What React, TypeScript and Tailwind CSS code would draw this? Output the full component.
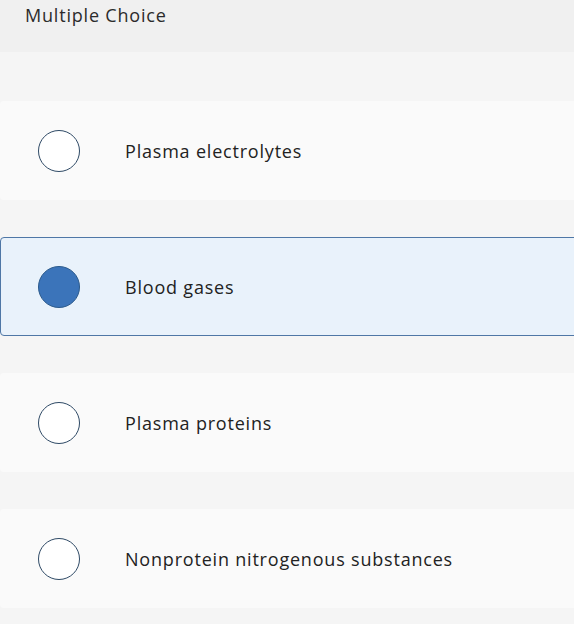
import React from "react";

const options = [
  { label: "Plasma electrolytes", selected: false },
  { label: "Blood gases", selected: true },
  { label: "Plasma proteins", selected: false },
  { label: "Nonprotein nitrogenous substances", selected: false },
];

export default function App() {
  return (
    <div className="w-[574px] h-[624px] overflow-hidden bg-[#f5f5f5] text-[#222]" style={{ fontFamily: "'Open Sans', sans-serif" }}>
      <div className="h-[52px] bg-[#f0f0f0] pl-[25px] pt-[3px] text-[18px] leading-[24px] tracking-[0.8px] text-[#2b2b2b]">
        Multiple Choice
      </div>
      <div className="flex flex-col gap-[37px] pt-[49px] pl-0 -mr-[8px]">
        {options.map((o) => (
          <div
            key={o.label}
            className={
              "h-[99px] rounded-l-[4px] flex items-center " +
              (o.selected
                ? "bg-[#e9f2fb] border border-[#4f77a6]"
                : "bg-[#fafafa] border border-transparent")
            }
          >
            <div className="w-[124px] shrink-0 pl-[37px]">
              <div
                className={
                  "w-[42px] h-[42px] rounded-full border " +
                  (o.selected ? "bg-[#3b74ba] border-[#2b5a8c]" : "bg-white border-[#2f4a66]")
                }
              />
            </div>
            <div className="pt-[1px] text-[18px] leading-[24px] tracking-[0.8px] text-[#222]">{o.label}</div>
          </div>
        ))}
      </div>
    </div>
  );
}
